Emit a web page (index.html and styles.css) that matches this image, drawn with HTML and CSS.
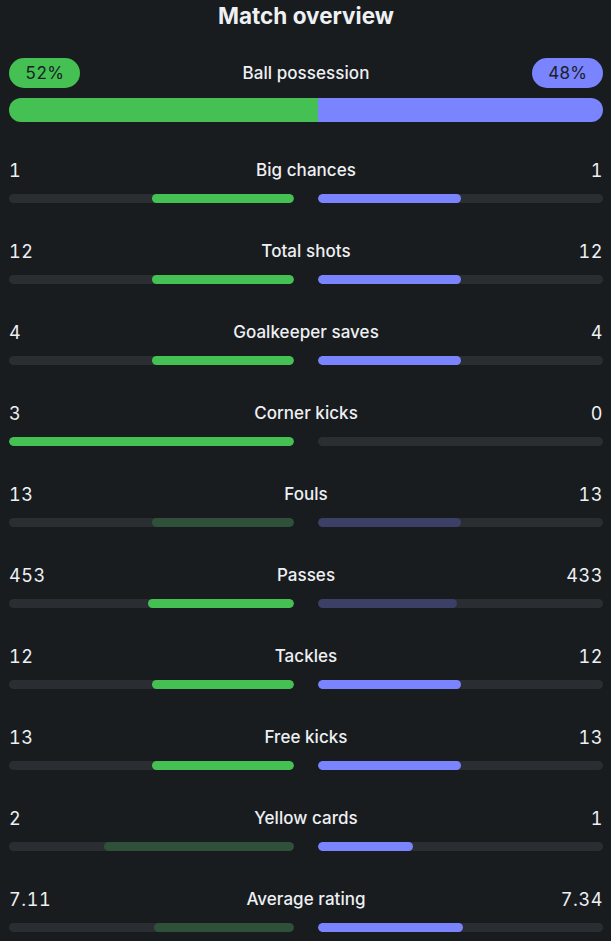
FILE: index.html
```html
<!DOCTYPE html>
<html lang="en">
<head>
<meta charset="utf-8">
<title>Match overview</title>
<link rel="stylesheet" href="styles.css">
</head>
<body>
<main class="overview">
  <h1 class="title">Match overview</h1>

  <section class="possession">
    <div class="poss-head">
      <span class="pill pill-home">52%</span>
      <span class="label">Ball possession</span>
      <span class="pill pill-away">48%</span>
    </div>
    <div class="poss-bar">
      <div class="poss-home" style="width:52%"></div>
      <div class="poss-away"></div>
    </div>
  </section>

  <section class="stat">
    <div class="stat-head"><span class="num">1</span><span class="label">Big chances</span><span class="num">1</span></div>
    <div class="bars">
      <div class="track track-home"><div class="fill home" style="width:50%"></div></div>
      <div class="track track-away"><div class="fill away" style="width:50%"></div></div>
    </div>
  </section>

  <section class="stat">
    <div class="stat-head"><span class="num">12</span><span class="label">Total shots</span><span class="num">12</span></div>
    <div class="bars">
      <div class="track track-home"><div class="fill home" style="width:50%"></div></div>
      <div class="track track-away"><div class="fill away" style="width:50%"></div></div>
    </div>
  </section>

  <section class="stat">
    <div class="stat-head"><span class="num">4</span><span class="label">Goalkeeper saves</span><span class="num">4</span></div>
    <div class="bars">
      <div class="track track-home"><div class="fill home" style="width:50%"></div></div>
      <div class="track track-away"><div class="fill away" style="width:50%"></div></div>
    </div>
  </section>

  <section class="stat">
    <div class="stat-head"><span class="num">3</span><span class="label">Corner kicks</span><span class="num">0</span></div>
    <div class="bars">
      <div class="track track-home"><div class="fill home" style="width:100%"></div></div>
      <div class="track track-away"><div class="fill away" style="width:0%"></div></div>
    </div>
  </section>

  <section class="stat">
    <div class="stat-head"><span class="num">13</span><span class="label">Fouls</span><span class="num">13</span></div>
    <div class="bars">
      <div class="track track-home"><div class="fill home dim" style="width:50%"></div></div>
      <div class="track track-away"><div class="fill away dim" style="width:50%"></div></div>
    </div>
  </section>

  <section class="stat">
    <div class="stat-head"><span class="num">453</span><span class="label">Passes</span><span class="num">433</span></div>
    <div class="bars">
      <div class="track track-home"><div class="fill home" style="width:51.1%"></div></div>
      <div class="track track-away"><div class="fill away dim" style="width:48.9%"></div></div>
    </div>
  </section>

  <section class="stat">
    <div class="stat-head"><span class="num">12</span><span class="label">Tackles</span><span class="num">12</span></div>
    <div class="bars">
      <div class="track track-home"><div class="fill home" style="width:50%"></div></div>
      <div class="track track-away"><div class="fill away" style="width:50%"></div></div>
    </div>
  </section>

  <section class="stat">
    <div class="stat-head"><span class="num">13</span><span class="label">Free kicks</span><span class="num">13</span></div>
    <div class="bars">
      <div class="track track-home"><div class="fill home" style="width:50%"></div></div>
      <div class="track track-away"><div class="fill away" style="width:50%"></div></div>
    </div>
  </section>

  <section class="stat">
    <div class="stat-head"><span class="num">2</span><span class="label">Yellow cards</span><span class="num">1</span></div>
    <div class="bars">
      <div class="track track-home"><div class="fill home dim" style="width:66.7%"></div></div>
      <div class="track track-away"><div class="fill away" style="width:33.3%"></div></div>
    </div>
  </section>

  <section class="stat">
    <div class="stat-head"><span class="num">7.11</span><span class="label">Average rating</span><span class="num">7.34</span></div>
    <div class="bars">
      <div class="track track-home"><div class="fill home dim" style="width:49.2%"></div></div>
      <div class="track track-away"><div class="fill away" style="width:50.8%"></div></div>
    </div>
  </section>
</main>
</body>
</html>
```

FILE: styles.css
```css
html, body {
  margin: 0;
  padding: 0;
  background: #181c1f;
}

body {
  color: #eef0f3;
  font-family: "Inter", "Roboto", "Liberation Sans", sans-serif;
}

.overview {
  width: 611px;
  box-sizing: border-box;
  padding: 0 8px 0 9px;
}

.title {
  margin: 0;
  height: 30px;
  line-height: 31px;
  text-align: center;
  font-size: 22.5px;
  font-weight: 700;
  letter-spacing: 0;
}

.possession {
  margin-top: 28px;
}

.poss-head {
  display: flex;
  align-items: center;
  justify-content: space-between;
  height: 30px;
}

.pill {
  width: 71px;
  height: 30px;
  border-radius: 15px;
  display: flex;
  align-items: center;
  justify-content: center;
  font-size: 17px;
  font-variant-numeric: tabular-nums;
  color: #1b2128;
}

.pill-home { background: #44c152; }
.pill-away { background: #7a84ff; }

.label {
  font-size: 17px;
  font-weight: 500;
  letter-spacing: 0.05px;
}

.poss-bar {
  display: flex;
  height: 24px;
  border-radius: 12px;
  overflow: hidden;
  margin-top: 10px;
}

.poss-home { background: #44c152; }
.poss-away { background: #7a84ff; flex: 1; }

.stat {
  margin-top: 36px;
}

.stat-head {
  display: flex;
  align-items: center;
  justify-content: space-between;
  height: 24px;
}

.num {
  font-size: 18px;
  font-weight: 400;
  font-variant-numeric: tabular-nums;
  letter-spacing: 0.6px;
}

.bars {
  display: flex;
  gap: 24px;
  margin-top: 12px;
}

.track {
  flex: 1;
  height: 9px;
  border-radius: 5px;
  background: #2a2e33;
  display: flex;
  overflow: hidden;
}

.track-home { justify-content: flex-end; }
.track-away { justify-content: flex-start; }

.fill {
  height: 100%;
  border-radius: 5px;
}

.fill.home { background: #44c152; }
.fill.away { background: #7a84ff; }
.fill.home.dim { background: #2f5139; }
.fill.away.dim { background: #3d4066; }
```
